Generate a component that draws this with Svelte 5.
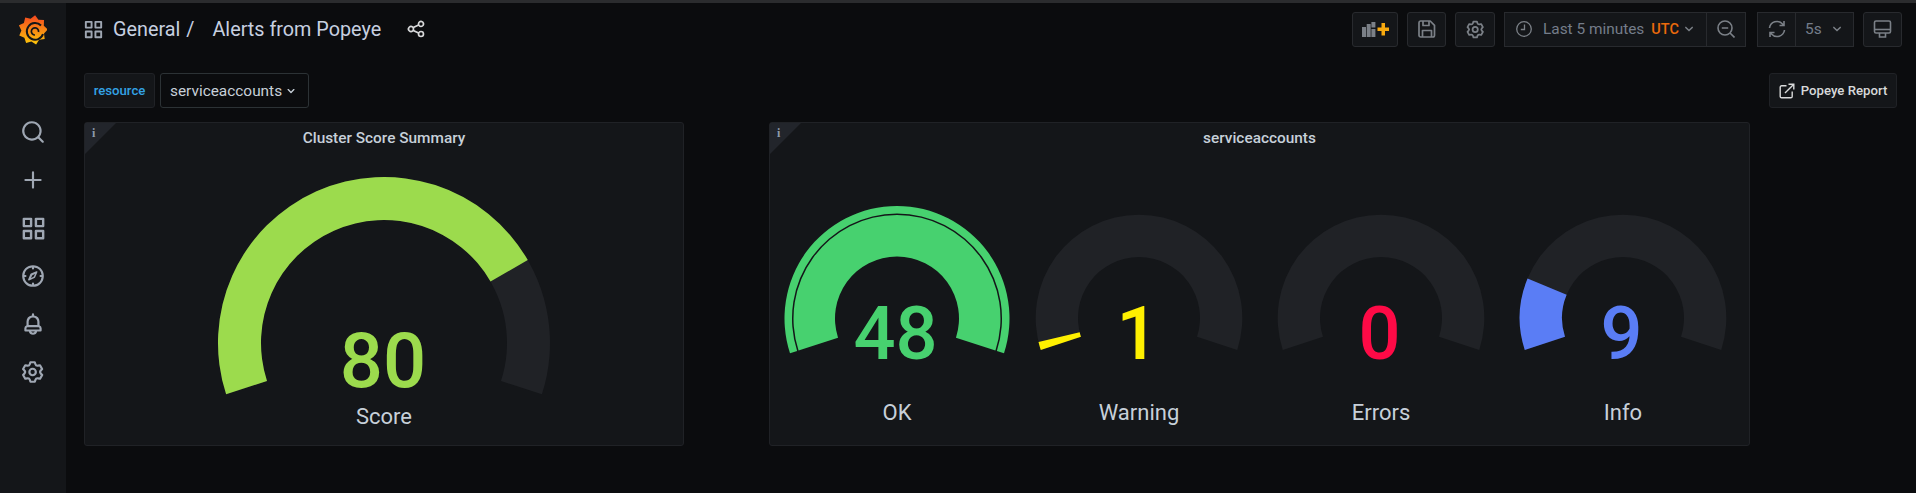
<script>
	// angles are degrees clockwise from the gauge start (18deg below the left horizontal)
	function pt(cx, cy, r, a) {
		const t = ((198 - a) * Math.PI) / 180;
		return `${(cx + r * Math.cos(t)).toFixed(2)} ${(cy - r * Math.sin(t)).toFixed(2)}`;
	}
	function arc(cx, cy, r0, r1, a0, a1) {
		const large = a1 - a0 > 180 ? 1 : 0;
		return `M${pt(cx, cy, r1, a0)}A${r1} ${r1} 0 ${large} 1 ${pt(cx, cy, r1, a1)}L${pt(cx, cy, r0, a1)}A${r0} ${r0} 0 ${large} 0 ${pt(cx, cy, r0, a0)}Z`;
	}

	const gauges = [
		{ label: 'OK', value: 48, color: '#47d16f', sweep: 216, ring: true },
		{ label: 'Warning', value: 1, color: '#fff000', sweep: 4.6 },
		{ label: 'Errors', value: 0, color: '#ff0a46', sweep: 0 },
		{ label: 'Info', value: 9, color: '#5a7df5', sweep: 40.5 }
	];

	// grafana logo outline, built from a star
	let logo = '';
	for (let i = 0; i < 18; i++) {
		const t = (i * 20 - 82) * Math.PI / 180;
		const r = i % 2 ? 11.6 : 14.8;
		logo += `${i ? 'L' : 'M'}${(14 + r * Math.cos(t)).toFixed(1)} ${(15 + r * Math.sin(t)).toFixed(1)}`;
	}
	logo += 'Z';

	const side = [
		'M21.71,20.29,18,16.61A9,9,0,1,0,16.61,18l3.68,3.68a1,1,0,0,0,1.42,0A1,1,0,0,0,21.71,20.29ZM11,18a7,7,0,1,1,7-7A7,7,0,0,1,11,18Z',
		'M19,11H13V5a1,1,0,0,0-2,0v6H5a1,1,0,0,0,0,2h6v6a1,1,0,0,0,2,0V13h6a1,1,0,0,0,0-2Z',
		'M10,3H4A1,1,0,0,0,3,4v6a1,1,0,0,0,1,1h6a1,1,0,0,0,1-1V4A1,1,0,0,0,10,3ZM9,9H5V5H9Zm11-6H14a1,1,0,0,0-1,1v6a1,1,0,0,0,1,1h6a1,1,0,0,0,1-1V4A1,1,0,0,0,20,3ZM19,9H15V5h4ZM10,13H4a1,1,0,0,0-1,1v6a1,1,0,0,0,1,1h6a1,1,0,0,0,1-1V14A1,1,0,0,0,10,13ZM9,19H5V15H9Zm11-6H14a1,1,0,0,0-1,1v6a1,1,0,0,0,1,1h6a1,1,0,0,0,1-1V14A1,1,0,0,0,20,13Zm-1,6H15V15h4Z',
		'M12,2A10,10,0,1,0,22,12,10,10,0,0,0,12,2Zm1,17.93V19a1,1,0,0,0-2,0v.93A8,8,0,0,1,4.07,13H5a1,1,0,0,0,0-2H4.07A8,8,0,0,1,11,4.07V5a1,1,0,0,0,2,0V4.07A8,8,0,0,1,19.93,11H19a1,1,0,0,0,0,2h.93A8,8,0,0,1,13,19.93ZM15.14,7.55l-5,2.12a1,1,0,0,0-.52.52l-2.12,5a.7.7,0,0,0,.89.89l5-2.12a1,1,0,0,0,.52-.52l2.12-5A.7.7,0,0,0,15.14,7.55ZM12.6,12.6l-2.5,1.3,1.3-2.5,2.5-1.3Z',
		'M18,13.18V10a6,6,0,0,0-5-5.91V3a1,1,0,0,0-2,0V4.09A6,6,0,0,0,6,10v3.18A3,3,0,0,0,4,16v2a1,1,0,0,0,1,1H8.14a4,4,0,0,0,7.72,0H19a1,1,0,0,0,1-1V16A3,3,0,0,0,18,13.18ZM8,10a4,4,0,0,1,8,0v3H8Zm4,10a2,2,0,0,1-1.72-1h3.44A2,2,0,0,1,12,20Zm6-3H6V16a1,1,0,0,1,1-1H17a1,1,0,0,1,1,1Z',
		'M19.9,12.66a1,1,0,0,1,0-1.32L21.18,9.9a1,1,0,0,0,.12-1.17l-2-3.46a1,1,0,0,0-1.07-.48l-1.88.38a1,1,0,0,1-1.15-.66l-.61-1.83A1,1,0,0,0,13.64,2h-4a1,1,0,0,0-1,.68L8.08,4.51a1,1,0,0,1-1.15.66L5,4.79A1,1,0,0,0,4,5.27L2,8.73A1,1,0,0,0,2.1,9.9l1.27,1.44a1,1,0,0,1,0,1.32L2.1,14.1A1,1,0,0,0,2,15.27l2,3.46a1,1,0,0,0,1.07.48l1.88-.38a1,1,0,0,1,1.15.66l.61,1.83a1,1,0,0,0,1,.68h4a1,1,0,0,0,.95-.68l.61-1.83a1,1,0,0,1,1.15-.66l1.88.38a1,1,0,0,0,1.07-.48l2-3.46a1,1,0,0,0-.12-1.17ZM18.41,14l.8.9-1.28,2.22-1.18-.24a3,3,0,0,0-3.45,2L12.92,20H10.36L10,18.86a3,3,0,0,0-3.45-2l-1.18.24L4.07,14.89l.8-.9a3,3,0,0,0,0-4l-.8-.9L5.35,6.89l1.18.24a3,3,0,0,0,3.45-2L10.36,4h2.56l.38,1.14a3,3,0,0,0,3.45,2l1.18-.24,1.28,2.22-.8.9A3,3,0,0,0,18.41,14ZM11.64,8a4,4,0,1,0,4,4A4,4,0,0,0,11.64,8Zm0,6a2,2,0,1,1,2-2A2,2,0,0,1,11.64,14Z'
	];
	const cog = side[5];
	const grid = side[2];
	const share = 'M18,14a4,4,0,0,0-3.08,1.48l-5.1-2.35a3.64,3.64,0,0,0,0-2.26l5.1-2.35A4,4,0,1,0,14,6a4.17,4.17,0,0,0,.07.71L8.79,9.14a4,4,0,1,0,0,5.72l5.28,2.43A4.17,4.17,0,0,0,14,18a4,4,0,1,0,4-4ZM18,4a2,2,0,1,1-2,2A2,2,0,0,1,18,4ZM6,14a2,2,0,1,1,2-2A2,2,0,0,1,6,14Zm12,6a2,2,0,1,1,2-2A2,2,0,0,1,18,20Z';
	const chevron = 'M17,9.17a1,1,0,0,0-1.41,0L12,12.71,8.46,9.17a1,1,0,0,0-1.41,0,1,1,0,0,0,0,1.42l4.24,4.24a1,1,0,0,0,1.42,0L17,10.59A1,1,0,0,0,17,9.17Z';
</script>

<div class="top-strip"></div>
<div class="app">
	<nav class="sidebar">
		<svg class="logo" width="28" height="30" viewBox="0 0 28 30">
			<defs>
				<linearGradient id="flame" x1="0" y1="0" x2="0" y2="1">
					<stop offset="0" stop-color="#f4471f" />
					<stop offset="1" stop-color="#fdc80a" />
				</linearGradient>
			</defs>
			<path d={logo} fill="url(#flame)" />
			<path d="M22 10.5A8.3 8.3 0 1 0 24 19" fill="none" stroke="#141619" stroke-width="2" />
			<path d="M19.5 17A3.6 3.6 0 1 0 16 20" fill="none" stroke="#141619" stroke-width="1.7" />
		</svg>
		{#each side as d, i}
			<div class="side-item">
				<svg class:wide={i === 2} width="26" height="26" viewBox="0 0 24 24"><path {d} /></svg>
			</div>
		{/each}
	</nav>

	<main class="main">
		<header class="header">
			<svg class="grid-icon" width="23" height="23" viewBox="0 0 24 24"><path d={grid} /></svg>
			<span class="crumb">General</span>
			<span class="slash">/</span>
			<span class="crumb">Alerts from Popeye</span>
			<svg class="share" width="20" height="20" viewBox="0 0 24 24"><path d={share} /></svg>

			<div class="toolbar">
				<button class="tb add">
					<svg width="27" height="15" viewBox="0 0 27 15">
						<path d="M0 5h4v10H0zM4.7 2h4v13h-4zM9.400 7h4v8h-4zM9.400 0h4v5.500h-4z" fill="#7b8087" />
						<path d="M19.5 1h3.500v4.500h4V9h-4v4.500h-3.500V9h-4V5.500h4z" fill="#f7a90f" />
					</svg>
				</button>
				<button class="tb save">
					<svg width="18" height="18" viewBox="0 0 18 18" fill="none" stroke="#7b8087" stroke-width="1.7" stroke-linejoin="round">
						<path d="M2.5 1h9.700l4.300 4.300v10a1.700 1.700 0 0 1-1.700 1.700H2.700A1.700 1.700 0 0 1 1 15.300V2.700A1.700 1.700 0 0 1 2.500 1z" />
						<path d="M5 1v4.500h6V1M4.500 17v-6.500h9V17" />
					</svg>
				</button>
				<button class="tb cog">
					<svg width="21" height="21" viewBox="0 0 24 24"><path d={cog} /></svg>
				</button>
				<div class="group picker">
					<button class="seg range">
						<svg class="clock" width="16" height="16" viewBox="0 0 16 16" fill="none" stroke="#7b8087" stroke-width="1.3">
							<circle cx="8" cy="8" r="7.3" />
							<path d="M8.5 3.500v5H4.800" />
						</svg>
						<span class="range-text">Last 5 minutes</span>
						<span class="utc">UTC</span>
						<svg class="chev" width="18" height="18" viewBox="0 0 24 24"><path d={chevron} /></svg>
					</button>
					<button class="seg zoom">
						<svg width="18" height="18" viewBox="0 0 18 18" fill="none" stroke="#7b8087" stroke-width="1.6">
							<circle cx="8" cy="8" r="7" />
							<path d="M4.8 8h6.400M13 13 17.500 17.500" />
						</svg>
					</button>
				</div>
				<div class="group refresh">
					<button class="seg sync">
						<svg width="20" height="20" viewBox="0 0 20 20" fill="none" stroke="#7b8087" stroke-width="1.6">
							<path d="M2.5 9a7.500 7.500 0 0 1 13-4L17 6.500M17 2v4.500h-4.500M17.500 11a7.500 7.500 0 0 1-13 4L3 13.500M3 18v-4.500h4.500" />
						</svg>
					</button>
					<button class="seg interval">
						<span class="range-text">5s</span>
						<svg class="chev" width="18" height="18" viewBox="0 0 24 24"><path d={chevron} /></svg>
					</button>
				</div>
				<button class="tb tv">
					<svg width="19" height="18" viewBox="0 0 19 18" fill="none" stroke="#7b8087" stroke-width="1.6">
						<rect x="1.5" y="1" width="16" height="12" rx="1.5" />
						<path d="M1.5 9.500h16" />
						<path d="M6.5 13v4h6v-4" />
					</svg>
				</button>
			</div>
		</header>

		<div class="vars">
			<span class="var-label">resource</span>
			<button class="var-select">
				<span>serviceaccounts</span>
				<svg width="16" height="16" viewBox="0 0 24 24"><path d={chevron} /></svg>
			</button>
			<button class="report">
				<svg width="16" height="16" viewBox="0 0 16 16" fill="none" stroke="#d8d9da" stroke-width="1.4">
					<path d="M7.5 2.800H2.600A1.400 1.400 0 0 0 1.200 4.200v9.200a1.400 1.400 0 0 0 1.400 1.400h9.200a1.400 1.400 0 0 0 1.400-1.400V8.500" />
					<path d="M6 10 14.800 1.200M9.500 1.200h5.300v5.300" />
				</svg>
				<span>Popeye Report</span>
			</button>
		</div>

		<div class="panels">
			<section class="panel score">
				<div class="corner"><span>i</span></div>
				<div class="panel-title">Cluster Score Summary</div>
				<svg class="score-gauge" width="598" height="293" viewBox="0 0 598 293">
					<path d={arc(299, 191, 123, 166, 0, 216)} fill="#202226" />
					<path d={arc(299, 191, 123, 166, 0, 168)} fill="#9cdb4d" />
					<text x="298" y="234.5" class="big" font-size="76" fill="#9cdb4d">80</text>
					<text x="299" y="272" class="label">Score</text>
				</svg>
			</section>

			<section class="panel stats">
				<div class="corner"><span>i</span></div>
				<div class="panel-title">serviceaccounts</div>
				<div class="gauge-row">
					{#each gauges as g}
						<svg width="242" height="293" viewBox="0 0 242 293">
							{#if g.ring}
								<path d={arc(121, 166.5, 105, 112.5, 0, 216)} fill={g.color} />
								<path d={arc(121, 166.5, 62, 103.5, 0, 216)} fill={g.color} />
							{:else}
								<path d={arc(121, 166, 61, 103.3, 0, 216)} fill="#202226" />
								{#if g.sweep}
									<path d={arc(121, 166, 61, 103.3, 0, g.sweep)} fill={g.color} />
								{/if}
							{/if}
							<text x="119.5" y="207" class="big" font-size="74" fill={g.color}>{g.value}</text>
							<text x="121" y="268" class="label">{g.label}</text>
						</svg>
					{/each}
				</div>
			</section>
		</div>
	</main>
</div>

<style>
	:global(body) {
		margin: 0;
		background: #0b0c0e;
		overflow: hidden;
	}

	.top-strip {
		height: 3px;
		background: #2b2c2e;
	}

	.app {
		display: flex;
		height: 490px;
		font-family: Roboto, "Liberation Sans", sans-serif;
		color: #c7d0d9;
		background: #0b0c0e;
	}

	.sidebar {
		width: 66px;
		flex-shrink: 0;
		background: #141619;
		display: flex;
		flex-direction: column;
		align-items: center;
	}

	.logo {
		margin-top: 12px;
		margin-bottom: 63px;
	}

	.side-item {
		height: 48px;
		display: flex;
		align-items: center;
		justify-content: center;
	}

	.side-item svg {
		fill: #9fa7b3;
	}

	.side-item svg.wide {
		width: 29px;
		height: 29px;
	}

	.main {
		flex: 1;
		min-width: 0;
	}

	.header {
		height: 52px;
		display: flex;
		align-items: center;
		padding: 0 14px 0 16px;
	}

	.grid-icon {
		fill: #9fa7b3;
		margin-right: 8px;
	}

	.crumb {
		font-size: 19.8px;
		color: #c7d0e0;
	}

	.slash {
		font-size: 19.8px;
		color: #c7d0e0;
		margin: 0 18px 0 6px;
	}

	.share {
		fill: #d8d9da;
		margin-left: 25px;
	}

	.toolbar {
		margin-left: auto;
		display: flex;
		align-items: center;
		gap: 9px;
	}

	button {
		font-family: inherit;
		padding: 0;
		margin: 0;
		display: flex;
		align-items: center;
		justify-content: center;
		background: #141619;
		border: 1px solid #282a2e;
		border-radius: 3px;
		color: inherit;
	}

	.tb {
		height: 35px;
		width: 40px;
		box-sizing: border-box;
	}

	.tb.add {
		width: 46px;
	}

	.tb.save,
	.tb.tv {
		width: 39px;
	}

	.tb.cog svg {
		fill: #7b8087;
	}

	.group {
		display: flex;
		height: 35px;
		box-sizing: border-box;
	}

	.seg {
		height: 35px;
		box-sizing: border-box;
		border-radius: 0;
	}

	.seg + .seg {
		border-left: 0;
	}

	.picker {
		margin-right: 2px;
	}

	.range {
		width: 203px;
		justify-content: flex-start;
		padding-left: 11px;
	}

	.clock {
		margin-right: 11px;
	}

	.range-text {
		font-size: 15.4px;
		color: #747d8a;
	}

	.utc {
		font-size: 14.5px;
		font-weight: 500;
		color: #eb6a0c;
		margin-left: 7px;
	}

	.chev {
		fill: #7b8087;
		margin-left: 1px;
	}

	.interval .chev {
		margin-left: 6px;
	}

	.zoom {
		width: 39px;
	}

	.sync {
		width: 39px;
	}

	.interval {
		width: 58px;
		justify-content: flex-start;
		padding-left: 9px;
	}

	.vars {
		margin-top: 18px;
		height: 35px;
		display: flex;
		align-items: stretch;
		padding: 0 19px 0 18px;
		gap: 5px;
	}

	.var-label {
		width: 71px;
		box-sizing: border-box;
		display: flex;
		align-items: center;
		justify-content: center;
		font-size: 13.2px;
		font-weight: 500;
		color: #33a2e5;
		background: #141619;
		border: 1px solid #202226;
		border-radius: 3px;
	}

	.var-select {
		width: 149px;
		box-sizing: border-box;
		background: #0b0c0e;
		border-color: #2c3235;
		font-size: 15.4px;
		color: #c7d0d9;
		justify-content: flex-start;
		padding-left: 9px;
		gap: 1px;
	}

	.var-select svg {
		fill: #c7d0d9;
	}

	.report {
		margin-left: auto;
		width: 128px;
		box-sizing: border-box;
		font-size: 13.2px;
		font-weight: 500;
		color: #d8d9da;
		gap: 6px;
		border-color: #202226;
		background: #141619;
	}

	.panels {
		margin-top: 14px;
		padding-left: 18px;
		display: flex;
		gap: 85px;
	}

	.panel {
		position: relative;
		height: 324px;
		box-sizing: border-box;
		background: #141619;
		border: 1px solid #202226;
		border-radius: 3px;
	}

	.panel.score {
		width: 600px;
	}

	.panel.stats {
		width: 981px;
	}

	.corner {
		position: absolute;
		top: 0;
		left: 0;
		width: 31px;
		height: 31px;
		background: #22252b;
		clip-path: polygon(0 0, 100% 0, 0 100%);
	}

	.corner span {
		position: absolute;
		left: 7px;
		top: 3px;
		font: bold 12px "Liberation Serif", serif;
		color: #8e9bab;
	}

	.panel-title {
		height: 29px;
		line-height: 31px;
		text-align: center;
		font-size: 15.4px;
		font-weight: 500;
		color: #c7d0d9;
	}

	svg {
		display: block;
	}

	.gauge-row {
		display: grid;
		grid-template-columns: repeat(4, 1fr);
		padding: 0 4.5px 0 5.5px;
		justify-items: center;
	}

	.big {
		text-anchor: middle;
		font-family: Roboto, sans-serif;
		font-weight: 500;
	}

	.label {
		text-anchor: middle;
		font-family: Roboto, sans-serif;
		font-size: 22px;
		fill: #c7d0d9;
	}
</style>
